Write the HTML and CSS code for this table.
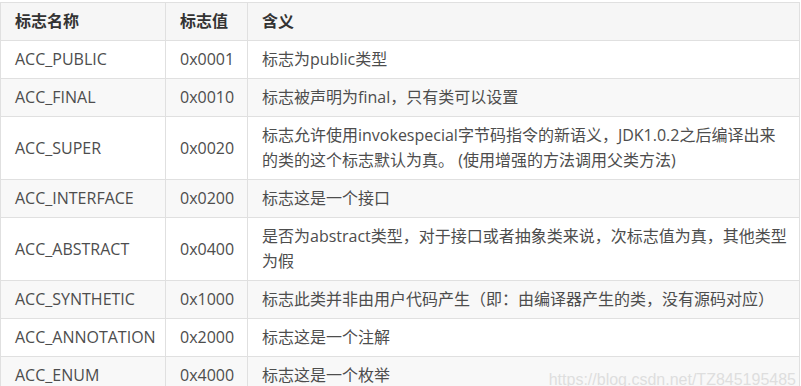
FILE: index.html
```html
<!DOCTYPE html>
<html lang="zh-CN">
<head>
<meta charset="utf-8">
<title>访问标志</title>
<link rel="stylesheet" href="styles.css">
</head>
<body>
<div class="wrap">
<table class="flags">
  <thead>
    <tr><th class="c1">标志名称</th><th class="c2">标志值</th><th class="c3">含义</th></tr>
  </thead>
  <tbody>
    <tr><td>ACC_PUBLIC</td><td>0x0001</td><td>标志为public类型</td></tr>
    <tr><td>ACC_FINAL</td><td>0x0010</td><td>标志被声明为final，只有类可以设置</td></tr>
    <tr><td>ACC_SUPER</td><td>0x0020</td><td>标志允许使用invokespecial字节码指令的新语义，JDK1.0.2之后编译出来<br>的类的这个标志默认为真。 (使用增强的方法调用父类方法)</td></tr>
    <tr><td>ACC_INTERFACE</td><td>0x0200</td><td>标志这是一个接口</td></tr>
    <tr><td>ACC_ABSTRACT</td><td>0x0400</td><td class="nowrap">是否为abstract类型，对于接口或者抽象类来说，次标志值为真，其他类型<br>为假</td></tr>
    <tr><td>ACC_SYNTHETIC</td><td>0x1000</td><td>标志此类并非由用户代码产生（即：由编译器产生的类，没有源码对应）</td></tr>
    <tr><td>ACC_ANNOTATION</td><td>0x2000</td><td>标志这是一个注解</td></tr>
    <tr><td>ACC_ENUM</td><td>0x4000</td><td>标志这是一个枚举</td></tr>
  </tbody>
</table>
<div class="watermark">https://blog.csdn.net/TZ845195485</div>
</div>
</body>
</html>
```
FILE: styles.css
```css
html, body {
  margin: 0;
  padding: 0;
  background: #ffffff;
}
body {
  font-family: "Open Sans", "Noto Sans CJK SC", sans-serif;
  font-size: 16px;
  color: #4d4d4d;
  overflow: hidden;
}
.wrap {
  position: relative;
  padding-top: 2px;
  height: 384px;
  overflow: hidden;
}
.flags {
  border-collapse: collapse;
  width: 800px;
  table-layout: fixed;
}
.flags th,
.flags td {
  border: 1px solid #e0e0e0;
  padding: 6px 13px 6px 14px;
  line-height: 25px;
  text-align: left;
  vertical-align: middle;
}
.flags th {
  font-weight: 700;
  color: #333333;
  background: #f6f6f6;
}
.c1 { width: 137px; }
.c2 { width: 54px; }
.flags .nowrap {
  white-space: nowrap;
}
.flags tbody tr:nth-child(2n) {
  background: #f8f8f8;
}
.watermark {
  position: absolute;
  right: 5px;
  bottom: -3px;
  font-family: "Liberation Sans", Arial, sans-serif;
  font-size: 16px;
  color: #dedede;
  white-space: nowrap;
}
```
